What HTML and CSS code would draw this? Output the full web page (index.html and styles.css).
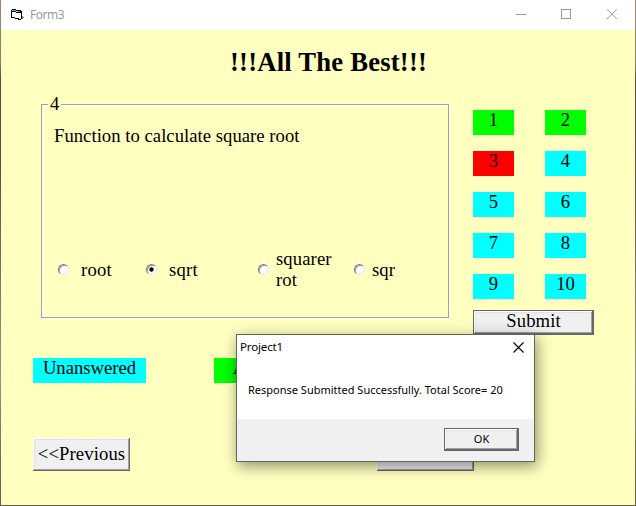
FILE: index.html
```
<!DOCTYPE html>
<html lang="en">
<head>
<meta charset="utf-8">
<title>Form3</title>
<link rel="stylesheet" href="styles.css">
</head>
<body>
<div class="window">
  <header class="titlebar">
    <svg class="app-icon" width="14" height="12" viewBox="0 0 14 12" shape-rendering="crispEdges">
      <path d="M1 1h5v1h4v8h-6v-1h-3z" fill="#fff"/>
      <path d="M1 1h4v1h5v1h-4v-1h-5z" fill="#00d8e0"/>
      <path d="M1 0h4v1h-4zM5 1h5v1h-5zM0 1h1v8h-1zM1 2h4v1h-4zM5 3h5v1h-5zM1 8h3v1h-3zM4 9h4v1h-4zM7 10h3v1h-3zM9 2h2v2h-2zM10 4h1v6h-1z" fill="#000"/>
      <path d="M11 7h1v1h1v1h-1v1h-1z" fill="#777"/>
    </svg>
    <span class="caption">Form3</span>
    <svg class="controls" width="102" height="11" viewBox="0 0 102 11" fill="none" stroke="#999">
      <path d="M0 5.500h10M45.500 .5h9v9h-9z" shape-rendering="crispEdges"/>
      <path d="M91 .3l9.800 9.800M100.800 .3l-9.800 9.800"/>
    </svg>
  </header>
  <main class="form">
    <h1 class="heading"><span>!!!All The Best!!!</span></h1>
    <div class="quiz">
      <section class="frame">
        <span class="number">4</span>
        <p class="question">Function to calculate square root</p>
        <div class="options">
          <label class="option"><span class="radio"></span><span class="answer">root</span></label>
          <label class="option"><span class="radio checked"></span><span class="answer">sqrt</span></label>
          <label class="option"><span class="radio"></span><span class="answer near">squarer<br>rot</span></label>
          <label class="option"><span class="radio"></span><span class="answer near">sqr</span></label>
        </div>
      </section>
      <aside class="side">
        <div class="cells">
          <span class="tag right">1</span><span class="tag right">2</span>
          <span class="tag wrong">3</span><span class="tag">4</span>
          <span class="tag">5</span><span class="tag">6</span>
          <span class="tag">7</span><span class="tag">8</span>
          <span class="tag">9</span><span class="tag">10</span>
        </div>
        <button class="button default submit">Submit</button>
      </aside>
    </div>
    <div class="legend"><span class="tag">Unanswered</span><span class="tag right">Answered</span></div>
    <div class="nav"><button class="button">&lt;&lt;Previous</button><button class="button" aria-label="Next"></button></div>
  </main>
</div>
<div class="dialog">
  <div class="dialog-title"><span>Project1</span>
    <svg width="11" height="11" viewBox="0 0 11 11" fill="none" stroke="#000" stroke-width="1.100"><path d="M.5 .5l10 10M10.500 .5l-10 10"/></svg>
  </div>
  <p class="message">Response Submitted Successfully. Total Score= 20</p>
  <div class="dialog-footer"><button class="button default ok">OK</button></div>
</div>
</body>
</html>
```
FILE: styles.css
```
* { box-sizing: border-box; }
body {
  margin: 0;
  width: 636px;
  height: 506px;
  overflow: hidden;
  position: relative;
  padding: 0 1px 1px;
  background: linear-gradient(#9a8968 0, #8f7c62 65px, #6a4048 80px, #70484c 170px, #8a6860 260px, #93918f 380px, #806658 460px, #6b5c50 506px);
  font: 18.67px/21px "Liberation Serif", "Times New Roman", serif;
  color: #000;
}
h1, p { margin: 0; }
.window { height: 505px; background: #ffffc0; }
.titlebar {
  height: 30px;
  display: flex;
  align-items: center;
  padding: 0 17px 0 10px;
  background: #fff;
  color: #999;
  font: 12px/16px "Noto Sans", sans-serif;
}
.app-icon { margin-top: -1px; }
.caption { margin-left: 5px; letter-spacing: -.45px; }
.controls { margin-left: auto; margin-top: -2px; }
.form { padding: 16px 40px 0 32px; }
.heading {
  width: 196px;
  margin-left: 197px;
  font-size: 26.67px;
  line-height: 32px;
  letter-spacing: .2px;
  white-space: nowrap;
}
.quiz { display: flex; margin-top: 26px; height: 231px; }
.frame {
  width: 408px;
  height: 214px;
  margin-left: 8px;
  border: 1px solid #a0a0a0;
  box-shadow: inset 1px 1px #fff, 1px 1px #fff;
  display: flex;
  flex-direction: column;
}
.number {
  align-self: flex-start;
  height: 20px;
  margin: -12px 0 0 6px;
  padding: 0 2px;
  background: #ffffc0;
}
.question { margin: 12px 0 0 12px; letter-spacing: .03px; }
.options {
  display: grid;
  grid-template-columns: 88px 112px 96px 1fr;
  align-items: center;
  height: 42px;
  margin: 102px 0 0 16px;
}
.option { display: flex; align-items: center; }
.answer { margin-left: 12px; letter-spacing: .25px; }
.answer.near { margin-left: 7px; letter-spacing: .1px; }
.radio {
  width: 11px;
  height: 11px;
  margin-top: 1px;
  border: 1px solid;
  border-color: #808080 #e8e8e8 #e8e8e8 #808080;
  border-radius: 50%;
  background: #fff;
  box-shadow: inset 1px 1px #a0a0a0;
}
.radio.checked { background: radial-gradient(circle at 50% 50%, #000 1.8px, #fff 2.500px); }
.side { margin: 6px 0 0 24px; width: 121px; }
.cells { display: grid; grid-template-columns: 41px 41px; gap: 16px 31px; }
.tag { height: 25px; background: #0ff; text-align: center; line-height: 20px; }
.right { background: #0f0; }
.wrong { background: #f00; }
.button {
  display: block;
  padding: 0;
  border: 0;
  border-radius: 0;
  background: #f0f0f0;
  color: #000;
  font: inherit;
  text-align: center;
  box-shadow: inset -1px -1px #696969, inset 1px 1px #fff, inset -2px -2px #a0a0a0, inset 2px 2px #e3e3e3;
}
.button.default {
  border: 1px solid #646464;
}
.submit { width: 121px; height: 25px; margin-top: 11px; padding-bottom: 3px; line-height: 20px; letter-spacing: .1px; }
.legend { display: flex; gap: 68px; margin-top: 23px; }
.legend .tag { width: 113px; }
.nav { display: flex; gap: 247px; margin-top: 55px; }
.nav .button { width: 97px; height: 33px; padding-bottom: 3px; letter-spacing: .1px; white-space: nowrap; }
.dialog {
  position: absolute;
  left: 236px;
  top: 334px;
  width: 299px;
  height: 128px;
  display: flex;
  flex-direction: column;
  border: 1px solid #65655a;
  background: #fff;
  box-shadow: 2px 4px 14px rgba(0, 0, 0, .45);
  font: 11.500px/16px "Noto Sans", sans-serif;
}
.dialog-title { display: flex; justify-content: space-between; padding: 4px 10px 0 3px; letter-spacing: -.15px; }
.dialog-title svg { margin-top: 3px; }
.message { margin: 27px 0 0 11px; font-size: 11px; white-space: nowrap; }
.dialog-footer { height: 42px; margin-top: auto; padding: 9px 15px 0 0; background: #f0f0f0; }
.ok { width: 75px; height: 23px; margin-left: auto; padding-bottom: 2px; font-size: 11px; line-height: 18px; }
```
